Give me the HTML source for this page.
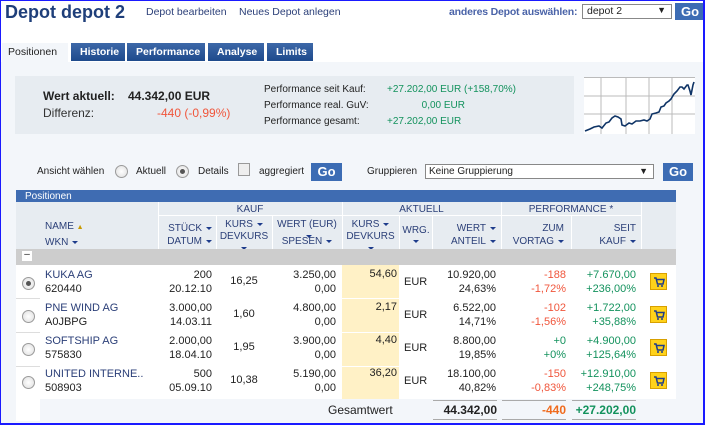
<!DOCTYPE html><html><head><meta charset="utf-8"><style>
*{margin:0;padding:0;box-sizing:border-box}
body{width:705px;height:425px;overflow:hidden;font-family:"Liberation Sans",sans-serif;font-size:11px;color:#222;background:#fff;position:relative}
.a{position:absolute;white-space:nowrap}
.r{text-align:right}
.c{text-align:center}
.frame{position:absolute;left:0;top:0;width:705px;height:425px;border:1px solid #1a1aff;border-right-width:2px;border-bottom-width:2px;pointer-events:none}
.tab{position:absolute;top:43px;height:18px;background:linear-gradient(#3d68a8,#1e4a8c);color:#fff;font-weight:bold;font-size:10.5px;padding:3px 0 0 9px}
.go{position:absolute;background:#3c6cb4;color:#fff;font-weight:bold;font-size:13px;text-align:center}
.hd{color:#2b3f78;font-size:10px}
.blue{color:#2b3f78}
.red{color:#f0563c}
.grn{color:#13925d}
.rad{position:absolute;width:13px;height:13px;border-radius:50%;border:1px solid #9a9a9a;background:radial-gradient(#fff,#ddd)}
.rad.on::after{content:"";position:absolute;left:3px;top:3px;width:5px;height:5px;border-radius:50%;background:#555}
.cart{position:absolute;width:17px;height:17px;background:#ffd21a;border:1px solid #d8a000}
.cart svg{position:absolute;left:2px;top:2px}
.tri{display:inline-block;width:0;height:0;border-left:3px solid transparent;border-right:3px solid transparent;border-top:3px solid #1e3c8c;margin-left:4px;vertical-align:middle}
</style></head><body>
<div class="a" style="left:5px;top:2px;font-size:18px;font-weight:bold;color:#1f3f7a">Depot depot 2</div>
<div class="a blue" style="left:146px;top:6px;font-size:10.5px">Depot bearbeiten</div>
<div class="a blue" style="left:239px;top:6px;font-size:10.5px">Neues Depot anlegen</div>
<div class="a" style="left:449px;top:6px;font-size:10.5px;color:#4a63a8;font-weight:bold;letter-spacing:-0.2px">anderes Depot auswählen:</div>
<div class="a" style="left:582px;top:4px;width:90px;height:15px;border:1px solid #888;background:#fff;padding-left:4px;font-size:10.5px">depot 2<span style="position:absolute;right:5px;top:0;font-size:9px">▼</span></div>
<div class="go" style="left:675px;top:3px;width:30px;height:17px;line-height:17px">Go</div>

<div class="a" style="left:0;top:62px;width:705px;height:363px;background:#f3f6fa"></div>
<div class="a" style="left:2px;top:43px;width:66px;height:19px;background:#f3f6fa;font-size:10.5px;padding:3px 0 0 6px">Positionen</div>
<div class="tab" style="left:71px;width:54px">Historie</div>
<div class="tab" style="left:127px;width:78px">Performance</div>
<div class="tab" style="left:208px;width:56px">Analyse</div>
<div class="tab" style="left:267px;width:46px">Limits</div>

<div class="a" style="left:15px;top:76px;width:559px;height:58px;background:#e7ecf1"></div>
<div class="a" style="left:43px;top:89px;font-size:12px;font-weight:bold">Wert aktuell:</div>
<div class="a" style="left:128px;top:89px;font-size:12px;font-weight:bold">44.342,00 EUR</div>
<div class="a" style="left:43px;top:106px;font-size:12px;color:#333">Differenz:</div>
<div class="a red" style="left:157px;top:106px;font-size:12px">-440 (-0,99%)</div>
<div class="a" style="left:264px;top:84px;font-size:10px">Performance seit Kauf:</div>
<div class="a" style="left:264px;top:100px;font-size:10px">Performance real. GuV:</div>
<div class="a" style="left:264px;top:116px;font-size:10px">Performance gesamt:</div>
<div class="a grn" style="left:387px;top:84px;font-size:10px">+27.202,00 EUR (+158,70%)</div>
<div class="a grn r" style="left:387px;top:100px;width:78px;font-size:10px">0,00 EUR</div>
<div class="a grn" style="left:387px;top:116px;font-size:10px">+27.202,00 EUR</div>
<svg class="a" style="left:584px;top:77px" width="111" height="57" viewBox="0 0 111 57">
<rect width="111" height="57" fill="#fff"/>
<g stroke="#bbb" stroke-width="1"><line x1="17" y1="0" x2="17" y2="57"/><line x1="42" y1="0" x2="42" y2="57"/><line x1="65" y1="0" x2="65" y2="57"/><line x1="88" y1="0" x2="88" y2="57"/><line x1="0" y1="0.5" x2="111" y2="0.5"/><line x1="0" y1="19" x2="111" y2="19"/><line x1="0" y1="37" x2="111" y2="37"/></g>
<polyline fill="none" stroke="#0f3466" stroke-width="1.6" points="1,54 6,52 10,50 15,49 18,51 22,46 25,45 28,41 31,39 34,40 37,42 38,48 41,49 45,46 48,47 52,44 56,44 60,43 63,44 66,42 68,37 72,36 75,35 77,30 80,29 82,26 85,24 87,22 90,17 93,14 96,10 98,10 100,12 103,8 104,8 106,14 107,18 109,8 110,5"/>
</svg>

<div class="a" style="left:37px;top:166px;font-size:10px">Ansicht wählen</div>
<div class="rad" style="left:115px;top:165px"></div>
<div class="a" style="left:136px;top:166px;font-size:10px">Aktuell</div>
<div class="rad on" style="left:176px;top:165px"></div>
<div class="a" style="left:198px;top:166px;font-size:10px">Details</div>
<div class="a" style="left:238px;top:163px;width:12px;height:13px;border:1px solid #999;background:#eee"></div>
<div class="a" style="left:259px;top:166px;font-size:10px">aggregiert</div>
<div class="go" style="left:311px;top:163px;width:31px;height:18px;line-height:18px">Go</div>
<div class="a" style="left:367px;top:166px;font-size:10px">Gruppieren</div>
<div class="a" style="left:425px;top:164px;width:229px;height:15px;border:1px solid #888;background:#fff;padding-left:3px;font-size:10px;line-height:13px">Keine Gruppierung<span style="position:absolute;right:5px;top:0;font-size:9px">▼</span></div>
<div class="go" style="left:663px;top:163px;width:30px;height:18px;line-height:18px">Go</div>

<!-- table -->
<div class="a" style="left:16px;top:190px;width:660px;height:12px;background:#3f6cb2;color:#fff;font-size:10px;padding-left:9px;line-height:13px">Positionen</div>
<div class="a" style="left:16px;top:202px;width:660px;height:47px;background:#e7ecf1"></div>
<div class="a" style="left:158px;top:202px;width:1px;height:47px;background:#fff"></div>
<div class="a" style="left:342px;top:202px;width:1px;height:47px;background:#fff"></div>
<div class="a" style="left:501px;top:202px;width:1px;height:47px;background:#fff"></div>
<div class="a" style="left:641px;top:202px;width:1px;height:47px;background:#fff"></div>
<div class="a" style="left:158px;top:215px;width:483px;height:1px;background:#fff"></div>
<div class="a" style="left:216px;top:215px;width:1px;height:34px;background:#fff"></div>
<div class="a" style="left:272px;top:215px;width:1px;height:34px;background:#fff"></div>
<div class="a" style="left:399px;top:215px;width:1px;height:34px;background:#fff"></div>
<div class="a" style="left:432px;top:215px;width:1px;height:34px;background:#fff"></div>
<div class="a" style="left:571px;top:215px;width:1px;height:34px;background:#fff"></div>
<div class="a hd c" style="left:158px;top:204px;width:184px">KAUF</div>
<div class="a hd c" style="left:342px;top:204px;width:159px">AKTUELL</div>
<div class="a hd c" style="left:501px;top:204px;width:140px">PERFORMANCE *</div>
<div class="a hd" style="left:45px;top:219px;line-height:15px">NAME <span style="color:#c89a00;font-size:7px">▲</span><br>WKN<span class="tri"></span></div>
<div class="a hd r" style="left:160px;top:222px;width:52px;line-height:13px">STÜCK<span class="tri"></span><br>DATUM<span class="tri"></span></div>
<div class="a hd c" style="left:216px;top:219px;width:56px;line-height:12px">KURS<span class="tri"></span><br>DEVKURS<br><span class="tri" style="margin:0"></span></div>
<div class="a hd c" style="left:272px;top:219px;width:70px;line-height:12px">WERT (EUR)<br><span class="tri"></span></div>
<div class="a hd c" style="left:272px;top:236px;width:70px">SPESEN<span class="tri"></span></div>
<div class="a hd c" style="left:342px;top:219px;width:57px;line-height:12px">KURS<span class="tri"></span><br>DEVKURS<br><span class="tri" style="margin:0"></span></div>
<div class="a hd c" style="left:400px;top:225px;width:32px;line-height:11px">WRG.<br><span class="tri" style="margin:0"></span></div>
<div class="a hd r" style="left:433px;top:222px;width:63px;line-height:13px">WERT<span class="tri"></span><br>ANTEIL<span class="tri"></span></div>
<div class="a hd r" style="left:502px;top:222px;width:62px;line-height:13px">ZUM<br>VORTAG<span class="tri"></span></div>
<div class="a hd r" style="left:572px;top:222px;width:64px;line-height:13px">SEIT<br>KAUF<span class="tri"></span></div>
<div class="a" style="left:16px;top:249px;width:660px;height:16px;background:#cdcdcd"></div>
<div class="a" style="left:22px;top:251px;width:10px;height:10px;background:#fff;font-size:10px;line-height:8px;text-align:center">–</div>
<div class="a" style="left:16px;top:265px;width:660px;height:134px;background:#fff"></div>
<div class="a" style="left:342px;top:265px;width:57px;height:134px;background:#fff1c6"></div>
<div class="a" style="left:16px;top:298px;width:24px;height:1px;background:#ddd"></div>
<div class="a" style="left:16px;top:332px;width:24px;height:1px;background:#ddd"></div>
<div class="a" style="left:16px;top:366px;width:24px;height:1px;background:#ddd"></div>
<div class="a" style="left:16px;top:399px;width:24px;height:1px;background:#ddd"></div>
<div class="a" style="left:342px;top:298px;width:57px;height:1px;background:#fff"></div>
<div class="a" style="left:342px;top:332px;width:57px;height:1px;background:#fff"></div>
<div class="a" style="left:342px;top:366px;width:57px;height:1px;background:#fff"></div>
<div class="a" style="left:16px;top:399px;width:24px;height:22px;background:#fff"></div>

<!-- rows -->
<div class="rad on" style="left:22px;top:277px"></div>
<div class="a blue" style="left:45px;top:268px;line-height:14px">KUKA AG<br><span style="color:#222">620440</span></div>
<div class="a r" style="left:160px;top:268px;width:52px;line-height:14px">200<br>20.12.10</div>
<div class="a c" style="left:216px;top:275px;width:56px">16,25</div>
<div class="a r" style="left:272px;top:268px;width:64px;line-height:14px">3.250,00<br>0,00</div>
<div class="a r" style="left:342px;top:268px;width:55px">54,60</div>
<div class="a" style="left:404px;top:276px">EUR</div>
<div class="a r" style="left:433px;top:268px;width:63px;line-height:14px">10.920,00<br>24,63%</div>
<div class="a r red" style="left:502px;top:268px;width:64px;line-height:14px">-188<br>-1,72%</div>
<div class="a r grn" style="left:572px;top:268px;width:64px;line-height:14px">+7.670,00<br>+236,00%</div>
<div class="cart" style="left:650px;top:273px"><svg width="12" height="12" viewBox="0 0 12 12"><path d="M1 2h2l1.5 6h5.5l1-4.5H4" fill="none" stroke="#1e3c8c" stroke-width="1.5"/><circle cx="5" cy="10" r="1" fill="#1e3c8c"/><circle cx="9" cy="10" r="1" fill="#1e3c8c"/></svg></div>

<div class="rad" style="left:22px;top:310px"></div>
<div class="a blue" style="left:45px;top:301px;line-height:14px">PNE WIND AG<br><span style="color:#222">A0JBPG</span></div>
<div class="a r" style="left:160px;top:301px;width:52px;line-height:14px">3.000,00<br>14.03.11</div>
<div class="a c" style="left:216px;top:308px;width:56px">1,60</div>
<div class="a r" style="left:272px;top:301px;width:64px;line-height:14px">4.800,00<br>0,00</div>
<div class="a r" style="left:342px;top:301px;width:55px">2,17</div>
<div class="a" style="left:404px;top:309px">EUR</div>
<div class="a r" style="left:433px;top:301px;width:63px;line-height:14px">6.522,00<br>14,71%</div>
<div class="a r red" style="left:502px;top:301px;width:64px;line-height:14px">-102<br>-1,56%</div>
<div class="a r grn" style="left:572px;top:301px;width:64px;line-height:14px">+1.722,00<br>+35,88%</div>
<div class="cart" style="left:650px;top:306px"><svg width="12" height="12" viewBox="0 0 12 12"><path d="M1 2h2l1.5 6h5.5l1-4.5H4" fill="none" stroke="#1e3c8c" stroke-width="1.5"/><circle cx="5" cy="10" r="1" fill="#1e3c8c"/><circle cx="9" cy="10" r="1" fill="#1e3c8c"/></svg></div>

<div class="rad" style="left:22px;top:343px"></div>
<div class="a blue" style="left:45px;top:334px;line-height:14px">SOFTSHIP AG<br><span style="color:#222">575830</span></div>
<div class="a r" style="left:160px;top:334px;width:52px;line-height:14px">2.000,00<br>18.04.10</div>
<div class="a c" style="left:216px;top:341px;width:56px">1,95</div>
<div class="a r" style="left:272px;top:334px;width:64px;line-height:14px">3.900,00<br>0,00</div>
<div class="a r" style="left:342px;top:334px;width:55px">4,40</div>
<div class="a" style="left:404px;top:342px">EUR</div>
<div class="a r" style="left:433px;top:334px;width:63px;line-height:14px">8.800,00<br>19,85%</div>
<div class="a r grn" style="left:502px;top:334px;width:64px;line-height:14px">+0<br>+0%</div>
<div class="a r grn" style="left:572px;top:334px;width:64px;line-height:14px">+4.900,00<br>+125,64%</div>
<div class="cart" style="left:650px;top:339px"><svg width="12" height="12" viewBox="0 0 12 12"><path d="M1 2h2l1.5 6h5.5l1-4.5H4" fill="none" stroke="#1e3c8c" stroke-width="1.5"/><circle cx="5" cy="10" r="1" fill="#1e3c8c"/><circle cx="9" cy="10" r="1" fill="#1e3c8c"/></svg></div>

<div class="rad" style="left:22px;top:376px"></div>
<div class="a blue" style="left:45px;top:367px;line-height:14px">UNITED INTERNE..<br><span style="color:#222">508903</span></div>
<div class="a r" style="left:160px;top:367px;width:52px;line-height:14px">500<br>05.09.10</div>
<div class="a c" style="left:216px;top:374px;width:56px">10,38</div>
<div class="a r" style="left:272px;top:367px;width:64px;line-height:14px">5.190,00<br>0,00</div>
<div class="a r" style="left:342px;top:367px;width:55px">36,20</div>
<div class="a" style="left:404px;top:375px">EUR</div>
<div class="a r" style="left:433px;top:367px;width:63px;line-height:14px">18.100,00<br>40,82%</div>
<div class="a r red" style="left:502px;top:367px;width:64px;line-height:14px">-150<br>-0,83%</div>
<div class="a r grn" style="left:572px;top:367px;width:64px;line-height:14px">+12.910,00<br>+248,75%</div>
<div class="cart" style="left:650px;top:372px"><svg width="12" height="12" viewBox="0 0 12 12"><path d="M1 2h2l1.5 6h5.5l1-4.5H4" fill="none" stroke="#1e3c8c" stroke-width="1.5"/><circle cx="5" cy="10" r="1" fill="#1e3c8c"/><circle cx="9" cy="10" r="1" fill="#1e3c8c"/></svg></div>

<div class="a" style="left:328px;top:403px;font-size:12px">Gesamtwert</div>
<div class="a r" style="left:433px;top:400px;width:64px;height:20px;border-top:1px solid #aaa;border-bottom:1px solid #aaa;font-size:12px;font-weight:bold;line-height:18px">44.342,00</div>
<div class="a r" style="left:502px;top:400px;width:64px;height:20px;border-top:1px solid #aaa;border-bottom:1px solid #aaa;font-size:12px;font-weight:bold;line-height:18px;color:#f06a1c">-440</div>
<div class="a r" style="left:572px;top:400px;width:64px;height:20px;border-top:1px solid #aaa;border-bottom:1px solid #aaa;font-size:12px;font-weight:bold;line-height:18px;color:#13925d">+27.202,00</div>
<div class="frame"></div>
</body></html>
